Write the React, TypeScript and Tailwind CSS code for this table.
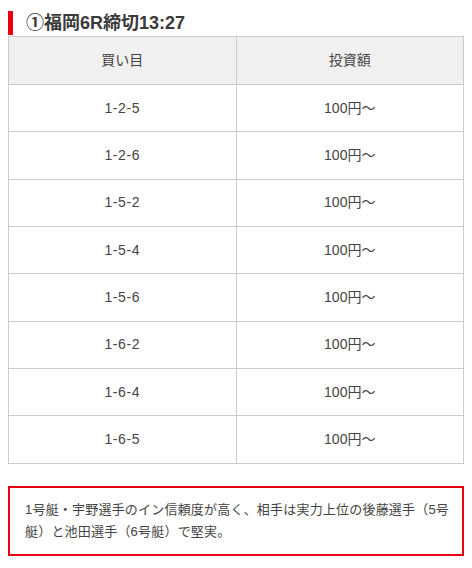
import React from "react";

const rows = ["1-2-5", "1-2-6", "1-5-2", "1-5-4", "1-5-6", "1-6-2", "1-6-4", "1-6-5"];

export default function App() {
  return (
    <div
      className="px-2 pt-[11px] bg-white text-[#333]"
      style={{ fontFamily: '"Liberation Sans", "Noto Sans CJK JP", sans-serif' }}
    >
      <div className="h-[24px] border-l-[5px] border-[#e60012] pl-[13px] text-[18px] font-bold leading-[24px] text-[#3a3a3a]">
        ①福岡6R締切13:27
      </div>
      <div className="mt-px border-t border-l border-[#cccccc]">
        <div className="grid grid-cols-2 h-[48px] bg-[#f0f0f0]">
          <div className="flex items-center justify-center border-r border-b border-[#cccccc] text-[14px] text-[#444]">
            買い目
          </div>
          <div className="flex items-center justify-center border-r border-b border-[#cccccc] text-[14px] text-[#444]">
            投資額
          </div>
        </div>
        {rows.map((r) => (
          <div key={r} className="grid grid-cols-2 h-[47.33px]">
            <div className="flex items-center justify-center border-r border-b border-[#cccccc] text-[14px] text-[#444] tracking-[0.6px]">
              {r}
            </div>
            <div className="flex items-center justify-center border-r border-b border-[#cccccc] text-[14px] text-[#444]">
              100円～
            </div>
          </div>
        ))}
      </div>
      <div className="mt-[22px] border-2 border-[#e60012] pl-[15px] pr-[8px] py-[11px] text-[13px] leading-[22px] tracking-[0.2px] text-[#444]">
        1号艇・宇野選手のイン信頼度が高く、相手は実力上位の後藤選手（5号艇）と池田選手（6号艇）で堅実。
      </div>
    </div>
  );
}
